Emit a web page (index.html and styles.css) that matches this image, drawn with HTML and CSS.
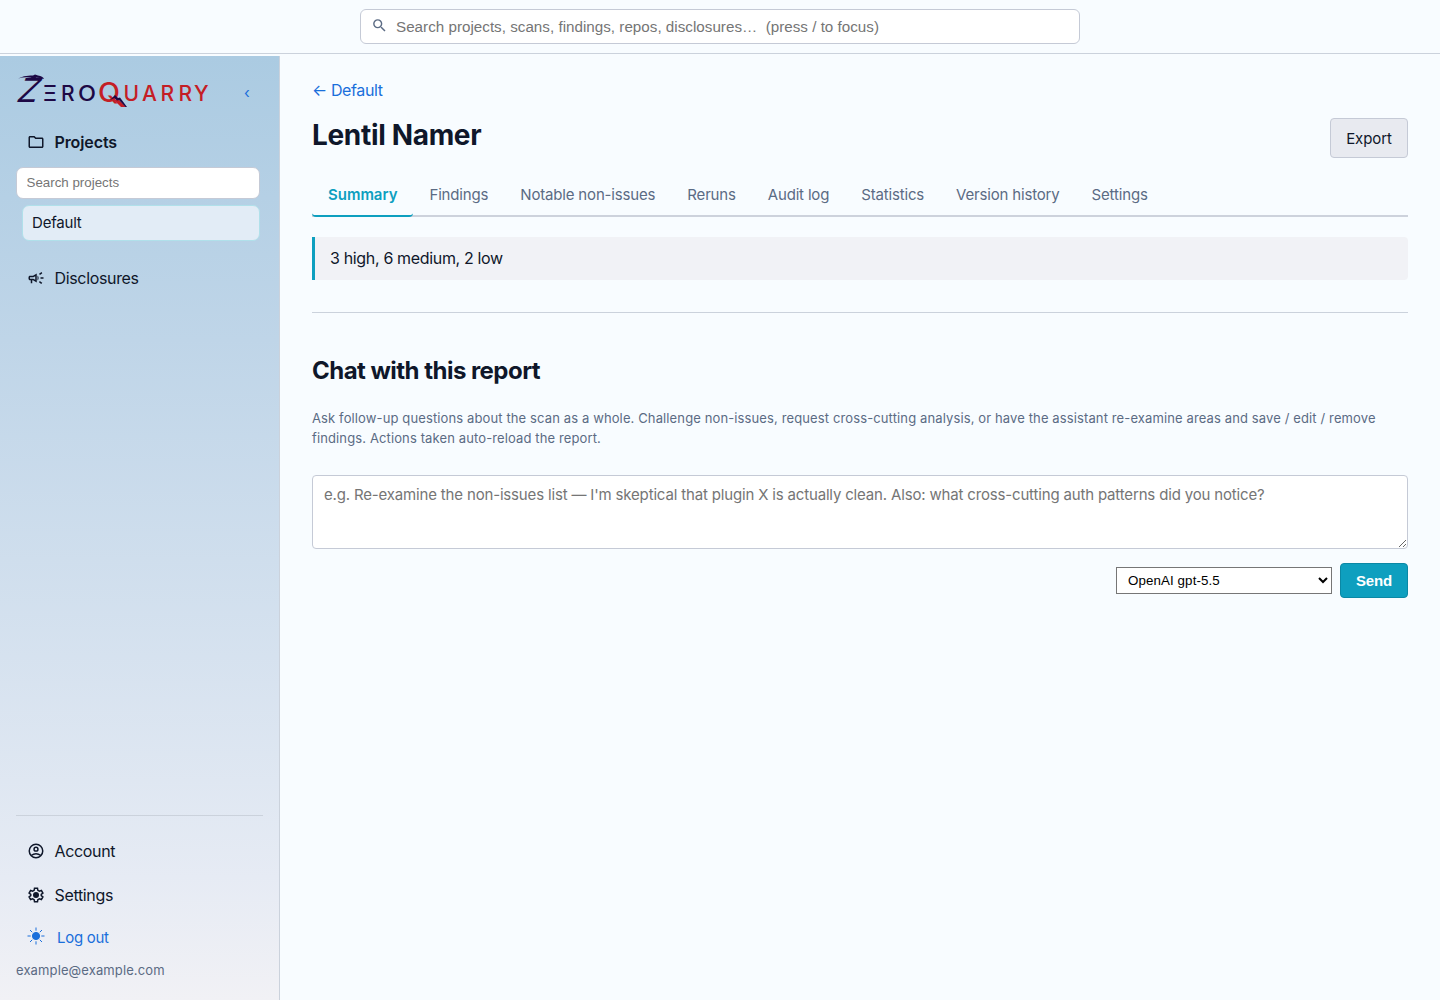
FILE: index.html
```html
<!DOCTYPE html>
<html lang="en">
<head>
    <meta charset="UTF-8">
    <meta name="viewport" content="width=device-width, initial-scale=1.0">
    <title>Lentil Namer - ZeroQuarry</title>
    <link rel="stylesheet" href="styles.css">
</head>
<body>

<header class="topbar">
    <div class="global-search">
        <svg class="search-icon" viewBox="0 0 24 24"><path d="M15.5 14h-.79l-.28-.27A6.47 6.47 0 0 0 16 9.5 6.5 6.5 0 1 0 9.5 16c1.61 0 3.09-.59 4.23-1.57l.27.28v.79l5 4.99L20.49 19l-4.99-5zm-6 0C7.01 14 5 11.99 5 9.5S7.01 5 9.5 5 14 7.01 14 9.5 11.99 14 9.5 14z"/></svg>
        <input type="text" placeholder="Search projects, scans, findings, repos, disclosures…  (press / to focus)">
    </div>
</header>

<div class="layout">
    <aside class="sidebar">
        <div class="brand">
            <svg class="logo" width="194" height="34" viewBox="0 0 194 34">
                <g class="logo-zero">
                    <text class="logo-z" transform="translate(-1 28) skewX(-20)" textLength="21" lengthAdjust="spacingAndGlyphs">Z</text>
                    <path d="M2 4.500Q9 .8 17 1.500l2-1 3 1q5 .5 6 3.500-5-1.500-8-1.300l-2 2-3-2Q9 2.500 2 4.500z"/>
                    <text x="27" y="26.500" textLength="14" lengthAdjust="spacingAndGlyphs">Ξ</text>
                    <text x="45" y="26.500">R</text>
                    <text x="62" y="26.500" textLength="18" lengthAdjust="spacingAndGlyphs">O</text>
                </g>
                <g class="logo-quarry">
                    <text class="logo-q" x="82" y="27.500" textLength="22" lengthAdjust="spacingAndGlyphs">Q</text>
                    <text x="107.500" y="26.500">U</text>
                    <text x="126" y="26.500">A</text>
                    <text x="144.500" y="26.500">R</text>
                    <text x="162.500" y="26.500">R</text>
                    <text x="178" y="26.500">Y</text>
                </g>
                <path class="logo-cart" d="M98 26l4-1 8 8h-5z"/>
                <path class="logo-peak" d="M94 26l5-5 3 3 2-.5 7 9.500h-1.500l-6.500-7-2 .5-2.500-2.500z"/>
            </svg>
            <a class="collapse" href="#">‹</a>
        </div>

        <a class="nav-item active" href="#">
            <svg viewBox="0 0 24 24"><path d="M9.170 6l2 2H20v10H4V6h5.170M10 4H4c-1.100 0-1.990.9-1.990 2L2 18c0 1.100.9 2 2 2h16c1.100 0 2-.9 2-2V8c0-1.100-.9-2-2-2h-8l-2-2z"/></svg>
            Projects
        </a>
        <input class="project-search" type="text" placeholder="Search projects">
        <a class="project" href="#">Default</a>
        <a class="nav-item" href="#">
            <svg viewBox="0 0 24 24"><path d="M18 11v2h4v-2h-4zm-2 6.610c.96.710 2.210 1.650 3.200 2.390.4-.53.8-1.070 1.200-1.600-.99-.74-2.240-1.680-3.200-2.400-.4.540-.8 1.080-1.200 1.610zM20.400 5.600c-.4-.53-.8-1.070-1.200-1.600-.99.740-2.240 1.680-3.200 2.400.4.530.8 1.070 1.200 1.600.96-.72 2.210-1.650 3.200-2.400zM4 9c-1.100 0-2 .9-2 2v2c0 1.100.9 2 2 2h1v4h2v-4h1l5 3V6L8 9H4zm5.030 1.710L11 9.530v4.940l-1.970-1.180-.48-.29H4v-2h4.550l.48-.29zM15.500 12c0-1.330-.58-2.530-1.500-3.350v6.690c.92-.81 1.500-2.010 1.500-3.340z"/></svg>
            Disclosures
        </a>

        <div class="sidebar-footer">
            <a class="nav-item" href="#">
                <svg viewBox="0 0 24 24"><g class="line"><circle cx="12" cy="12" r="9"/><circle cx="12" cy="9.500" r="2.600"/><path d="M5.500 18q6.500-4.500 13 0"/></g></svg>
                Account
            </a>
            <a class="nav-item" href="#">
                <svg viewBox="0 0 24 24"><path class="line" d="M10 3h4l.5 2.800 2 1.200 2.700-1 2 3.400-2.200 1.800v1.600l2.200 1.800-2 3.400-2.700-1-2 1.200L14 21h-4l-.5-2.800-2-1.200-2.700 1-2-3.400L5 12.800v-1.600L2.800 9.400l2-3.400 2.700 1 2-1.200z"/><circle cx="12" cy="12" r="4"/></svg>
                Settings
            </a>
            <a class="logout" href="#">
                <svg viewBox="0 0 18 18"><circle cx="9" cy="9" r="3.600"/><path d="M9 .5v3.200M9 14.300v3.200M.5 9h3.200M14.300 9h3.200M3 3l2.200 2.200M12.800 12.800L15 15M3 15l2.200-2.200M12.800 5.200L15 3"/></svg>
                Log out
            </a>
            <div class="email">example@example.com</div>
        </div>
    </aside>

    <main class="content">
        <a class="back" href="#">← Default</a>
        <div class="title-row">
            <h1>Lentil Namer</h1>
            <button class="export">Export</button>
        </div>

        <nav class="tabs">
            <a class="tab selected" href="#">Summary</a>
            <a class="tab" href="#">Findings</a>
            <a class="tab" href="#">Notable non-issues</a>
            <a class="tab" href="#">Reruns</a>
            <a class="tab" href="#">Audit log</a>
            <a class="tab" href="#">Statistics</a>
            <a class="tab" href="#">Version history</a>
            <a class="tab" href="#">Settings</a>
        </nav>

        <div class="summary">3 high, 6 medium, 2 low</div>

        <section class="chat">
            <h2>Chat with this report</h2>
            <p>Ask follow-up questions about the scan as a whole. Challenge non-issues, request cross-cutting analysis, or have the assistant re-examine areas and save / edit / remove findings. Actions taken auto-reload the report.</p>
            <textarea placeholder="e.g. Re-examine the non-issues list — I'm skeptical that plugin X is actually clean. Also: what cross-cutting auth patterns did you notice?"></textarea>
            <div class="chat-actions">
                <select>
                    <option>OpenAI gpt-5.5</option>
                </select>
                <button class="send">Send</button>
            </div>
        </section>
    </main>
</div>

</body>
</html>
```
FILE: styles.css
```css
* {
    box-sizing: border-box;
}

body {
    margin: 0;
    font-family: Inter, sans-serif;
    font-size: 16px;
    line-height: 24px;
    letter-spacing: -0.34px;
    color: #0f172a;
    background: #f8fcff;
}

a {
    color: #1a6fdb;
    text-decoration: none;
}

.topbar {
    height: 54px;
    padding-top: 9px;
    border-bottom: 1px solid #cbd2dc;
}

.global-search {
    display: flex;
    align-items: center;
    width: 720px;
    height: 35px;
    margin: 0 auto;
    padding: 0 10px;
    background: #fff;
    border: 1px solid #c5cad6;
    border-radius: 6px;
}

.search-icon {
    width: 17px;
    height: 17px;
    margin: 0 8px 3px 0;
    fill: #5b6b84;
}

.global-search input {
    flex: 1;
    padding: 0;
    border: 0;
    font: 15.2px "Liberation Sans", sans-serif;
    letter-spacing: 0.014px;
}

.layout {
    display: flex;
    height: 944px;
    margin-top: 2px;
}

.sidebar {
    display: flex;
    flex-direction: column;
    width: 280px;
    padding: 18px 16px;
    background: linear-gradient(180deg, #abcbe2, #bfd5e8 30%, #e6ebf4 87%, #f1f1f5);
    border-right: 1px solid #cbd2dc;
}

.brand {
    display: flex;
    align-items: flex-start;
    height: 46px;
}

.logo {
    overflow: visible;
}

.logo text {
    font-family: Inter, sans-serif;
    font-size: 21px;
    font-weight: 500;
    letter-spacing: 0;
}

.logo .logo-z {
    font-size: 33px;
    font-weight: 400;
}

.logo .logo-q {
    font-size: 27px;
    font-weight: 500;
}

.logo-zero,
.logo-peak {
    fill: #1d0845;
}

.logo-quarry,
.logo-cart {
    fill: #c41e26;
}

.collapse {
    margin: 7px 0 0 34px;
    font-size: 15px;
}

.nav-item {
    display: flex;
    align-items: center;
    height: 44px;
    padding-left: 10.5px;
    gap: 10px;
    color: #0f172a;
}

.nav-item svg {
    width: 18px;
    height: 18px;
    fill: currentColor;
}

.nav-item .line {
    fill: none;
    stroke: currentColor;
    stroke-width: 2;
}

.nav-item.active {
    font-weight: 600;
    letter-spacing: -0.1px;
}

.project-search {
    width: 244px;
    height: 32px;
    margin-top: 3px;
    padding: 0 9.5px 2px;
    border: 1px solid #c5cad6;
    border-radius: 7px;
    font: 13.33px "Liberation Sans", sans-serif;
}

.project {
    width: 238px;
    height: 36px;
    margin: 6px 0 15px 6px;
    padding: 0 9px;
    line-height: 34px;
    font-size: 15px;
    letter-spacing: -0.2px;
    color: #0f172a;
    background: #e2ecf6;
    border: 1px solid #b0e0ea;
    border-radius: 7px;
}

.sidebar-footer {
    margin-top: auto;
    padding-top: 13px;
    border-top: 1px solid #cbd2dc;
}

.logout {
    display: flex;
    align-items: center;
    height: 41px;
    padding-left: 10.5px;
    gap: 12.5px;
    font-size: 15px;
    letter-spacing: -0.3px;
}

.logout svg {
    width: 18px;
    height: 18px;
    margin-bottom: 4px;
    fill: currentColor;
    stroke: currentColor;
}

.email {
    height: 24px;
    font-size: 13px;
    letter-spacing: 0.12px;
    color: #5b6b84;
}

.content {
    flex: 1;
    padding: 22px 32px;
}

.back {
    display: block;
    letter-spacing: -0.4px;
}

.title-row {
    display: flex;
    justify-content: space-between;
    margin-top: 16px;
}

h1 {
    margin: 0;
    font-size: 28px;
    line-height: 34px;
    letter-spacing: -0.33px;
}

button {
    border-radius: 4px;
    font-size: 15px;
}

.export {
    width: 78px;
    height: 40px;
    padding: 0;
    color: #0f172a;
    background: #e8eaf0;
    border: 1px solid #c5cad6;
    font-family: inherit;
    letter-spacing: -0.1px;
}

.tabs {
    display: flex;
    height: 43px;
    margin-top: 16px;
    border-bottom: 2px solid #cdd2dc;
}

.tab {
    height: 43px;
    padding: 9px 16px 0;
    font-size: 15px;
    letter-spacing: -0.17px;
    color: #5b6b84;
}

.tab.selected {
    font-weight: 600;
    letter-spacing: -0.02px;
    color: #0e9fbf;
    border-bottom: 2px solid #0e9fbf;
    border-radius: 4px;
}

.summary {
    height: 43px;
    margin-top: 20px;
    padding: 9px 15px;
    background: #f1f2f6;
    border-left: 3px solid #0e9fbf;
    border-radius: 0 4px 4px 0;
}

.chat {
    margin-top: 32px;
    padding-top: 40px;
    border-top: 1px solid #cbd2dc;
}

h2 {
    margin: 0;
    font-size: 24px;
    line-height: 36px;
    letter-spacing: -0.53px;
}

.chat p {
    margin: 19px 0 27px;
    font-size: 13px;
    line-height: 20px;
    letter-spacing: 0.122px;
    color: #5b6b84;
}

textarea {
    display: block;
    width: 100%;
    height: 74px;
    padding: 8px 11px;
    border: 1px solid #c5cad6;
    border-radius: 4px;
    font: 15px/22px Inter, sans-serif;
    letter-spacing: -0.165px;
}

.chat-actions {
    display: flex;
    align-items: center;
    justify-content: flex-end;
    gap: 8px;
    margin-top: 14px;
}

select {
    width: 216px;
    height: 27px;
    padding: 0 7px;
    background: #fff;
    font: 13.33px "Liberation Sans", sans-serif;
    letter-spacing: 0.1px;
}

.send {
    width: 68px;
    height: 35px;
    padding: 0;
    color: #fff;
    background: #0e9fbf;
    border: 1px solid #0b88a5;
    font-family: "Liberation Sans", sans-serif;
    font-weight: 600;
    letter-spacing: -0.15px;
}
```
